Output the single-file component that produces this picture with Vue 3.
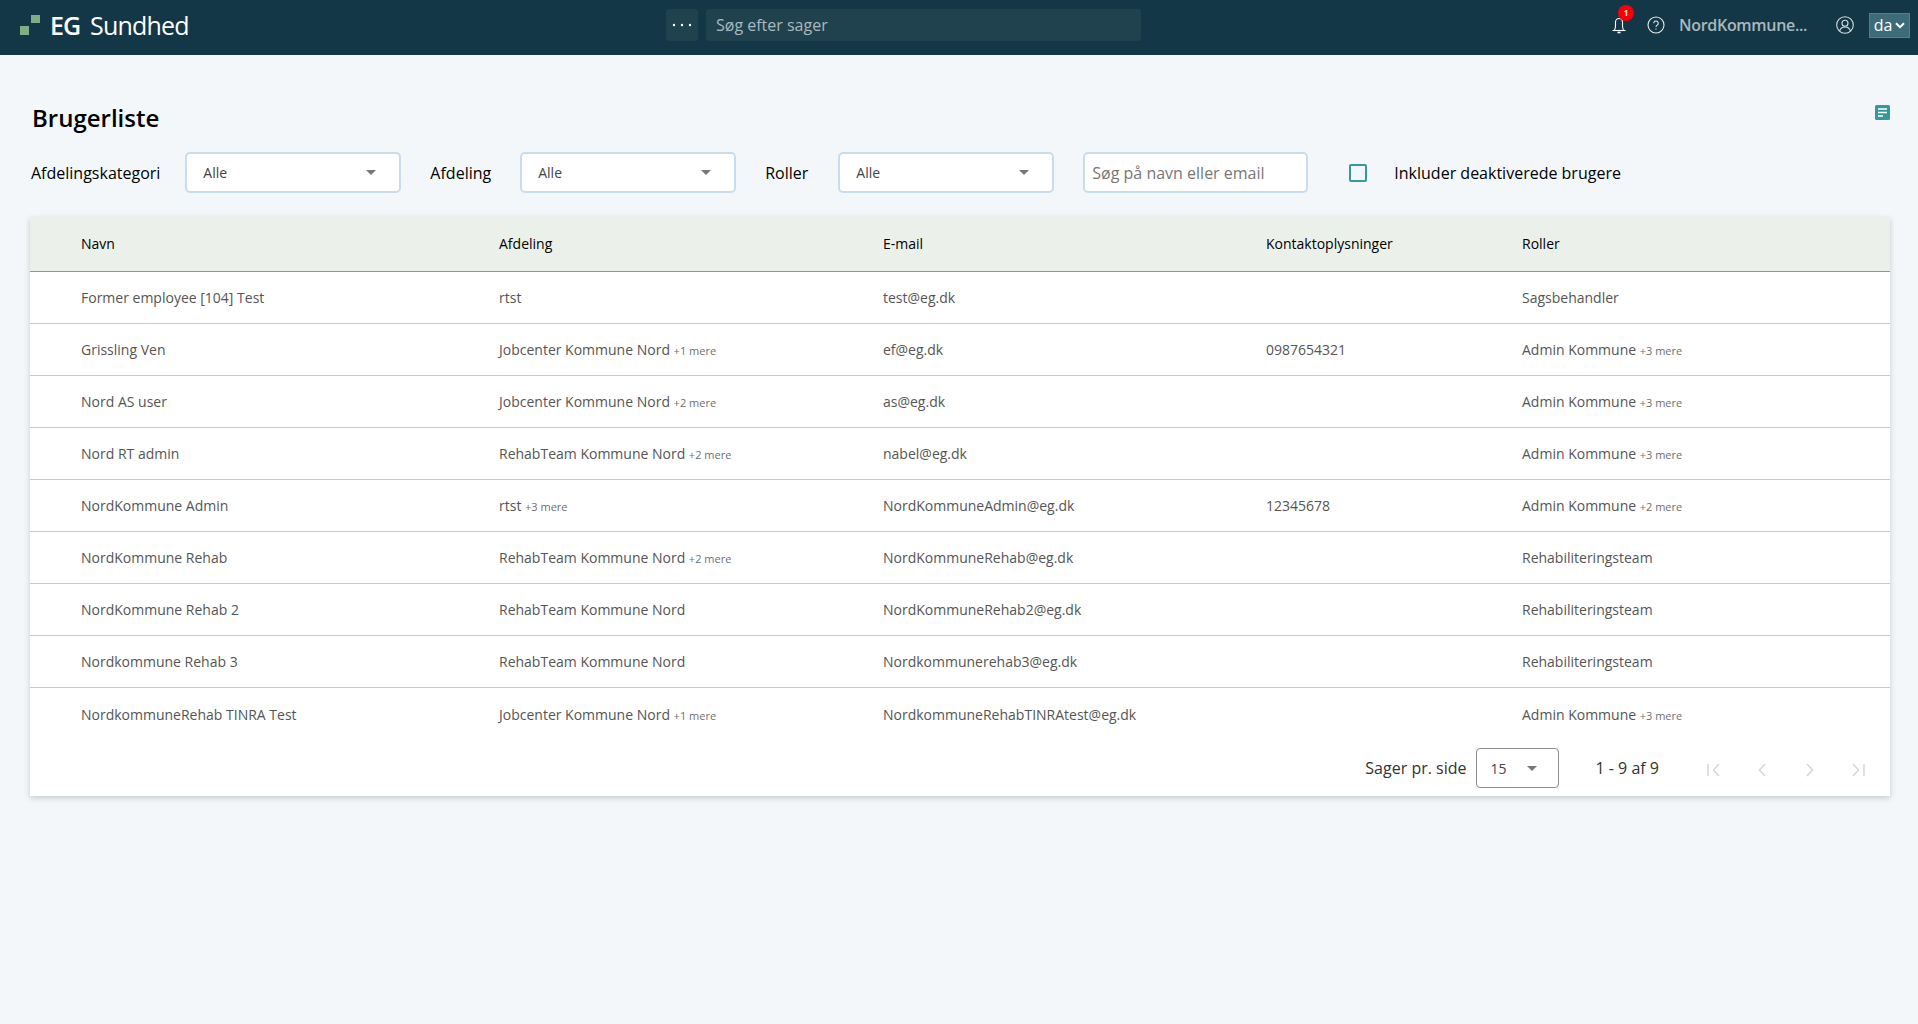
<script setup>
const filters = [
  { label: 'Afdelingskategori', value: 'Alle' },
  { label: 'Afdeling', value: 'Alle' },
  { label: 'Roller', value: 'Alle' }
]

const users = [
  { name: 'Former employee [104] Test', dept: 'rtst', deptMore: '', email: 'test@eg.dk', phone: '', role: 'Sagsbehandler', roleMore: '' },
  { name: 'Grissling Ven', dept: 'Jobcenter Kommune Nord', deptMore: '+1 mere', email: 'ef@eg.dk', phone: '0987654321', role: 'Admin Kommune', roleMore: '+3 mere' },
  { name: 'Nord AS user', dept: 'Jobcenter Kommune Nord', deptMore: '+2 mere', email: 'as@eg.dk', phone: '', role: 'Admin Kommune', roleMore: '+3 mere' },
  { name: 'Nord RT admin', dept: 'RehabTeam Kommune Nord', deptMore: '+2 mere', email: 'nabel@eg.dk', phone: '', role: 'Admin Kommune', roleMore: '+3 mere' },
  { name: 'NordKommune Admin', dept: 'rtst', deptMore: '+3 mere', email: 'NordKommuneAdmin@eg.dk', phone: '12345678', role: 'Admin Kommune', roleMore: '+2 mere' },
  { name: 'NordKommune Rehab', dept: 'RehabTeam Kommune Nord', deptMore: '+2 mere', email: 'NordKommuneRehab@eg.dk', phone: '', role: 'Rehabiliteringsteam', roleMore: '' },
  { name: 'NordKommune Rehab 2', dept: 'RehabTeam Kommune Nord', deptMore: '', email: 'NordKommuneRehab2@eg.dk', phone: '', role: 'Rehabiliteringsteam', roleMore: '' },
  { name: 'Nordkommune Rehab 3', dept: 'RehabTeam Kommune Nord', deptMore: '', email: 'Nordkommunerehab3@eg.dk', phone: '', role: 'Rehabiliteringsteam', roleMore: '' },
  { name: 'NordkommuneRehab TINRA Test', dept: 'Jobcenter Kommune Nord', deptMore: '+1 mere', email: 'NordkommuneRehabTINRAtest@eg.dk', phone: '', role: 'Admin Kommune', roleMore: '+3 mere' }
]
</script>

<template>
  <div class="page">
    <header class="topbar">
      <div class="brand">
        <svg class="logo" width="20" height="20" viewBox="0 0 20 20">
          <rect x="0" y="11" width="9" height="9" fill="#7fae84" />
          <rect x="11" y="0" width="9" height="8" fill="#7fae84" />
        </svg>
        <span class="brand-eg">EG</span>
        <span class="brand-name">Sundhed</span>
      </div>
      <div class="search-area">
        <button class="dots">
          <svg width="20" height="4" viewBox="0 0 20 4" fill="#fff">
            <circle cx="2" cy="2" r="1.2" />
            <circle cx="10" cy="2" r="1.2" />
            <circle cx="18" cy="2" r="1.2" />
          </svg>
        </button>
        <div class="case-search">Søg efter sager</div>
      </div>
      <div class="top-right">
        <div class="bell">
          <svg width="14" height="17" viewBox="0 0 14 17" fill="none" stroke="#fff" stroke-width="1.1">
            <path d="M2.500 13c.6-1 1-2 1-4V5a3.500 3.500 0 0 1 7 0v4c0 2 .4 3 1 4" />
            <path d="M.5 13.500h13" />
            <path d="M5.500 15.500h3" stroke-width="1.6" />
          </svg>
          <span class="badge">1</span>
        </div>
        <svg class="help" width="18" height="18" viewBox="0 0 18 18" fill="none" stroke="#e4eaec" stroke-width="1.1">
          <circle cx="9" cy="9" r="8" />
          <path d="M6.800 7.200a2.200 2.200 0 1 1 3.400 1.900c-.8.5-1.200 1-1.200 1.900" />
          <path d="M9 12.400v1.200" />
        </svg>
        <span class="username">NordKommune...</span>
        <svg class="user" width="18" height="18" viewBox="0 0 18 18" fill="none" stroke="#d5dee1" stroke-width="1.1">
          <circle cx="9" cy="9" r="8.3" />
          <circle cx="9" cy="7.2" r="3" />
          <path d="M3.600 15c.8-2.800 3-4 5.400-4s4.600 1.200 5.400 4" />
        </svg>
        <div class="lang">
          <span>da</span>
          <svg width="10" height="7" viewBox="0 0 10 7" fill="none" stroke="#fff" stroke-width="2">
            <path d="M1 1.200l4 4 4-4" />
          </svg>
        </div>
      </div>
    </header>

    <main class="content">
      <div class="title-row">
        <h1>Brugerliste</h1>
        <svg class="note-icon" width="15" height="15" viewBox="0 0 15 15">
          <rect width="15" height="15" rx="1.5" fill="#35989a" />
          <path d="M3 4h9M3 7.500h9M3 11h5" stroke="#fff" stroke-width="1.5" />
        </svg>
      </div>

      <div class="filters">
        <template v-for="f in filters" :key="f.label">
          <label class="filter-label">{{ f.label }}</label>
          <div class="select">
            <span>{{ f.value }}</span>
            <i class="caret"></i>
          </div>
        </template>
        <input class="search" type="text" placeholder="Søg på navn eller email" />
        <span class="checkbox"></span>
        <span class="check-label">Inkluder deaktiverede brugere</span>
      </div>

      <section class="card">
        <table>
          <colgroup>
            <col class="col-name" />
            <col class="col-dept" />
            <col class="col-mail" />
            <col class="col-phone" />
            <col />
          </colgroup>
          <thead>
            <tr>
              <th>Navn</th>
              <th>Afdeling</th>
              <th>E-mail</th>
              <th>Kontaktoplysninger</th>
              <th>Roller</th>
            </tr>
          </thead>
          <tbody>
            <tr v-for="u in users" :key="u.email">
              <td>{{ u.name }}</td>
              <td>{{ u.dept }} <small v-if="u.deptMore">{{ u.deptMore }}</small></td>
              <td>{{ u.email }}</td>
              <td>{{ u.phone }}</td>
              <td>{{ u.role }} <small v-if="u.roleMore">{{ u.roleMore }}</small></td>
            </tr>
          </tbody>
        </table>

        <div class="pager">
          <span class="per-page">Sager pr. side</span>
          <div class="page-select">
            <span>15</span>
            <i class="caret"></i>
          </div>
          <span class="range">1 - 9 af 9</span>
          <div class="page-btns">
            <svg width="16" height="14" viewBox="0 0 16 14" fill="none" stroke="#d6d6d6" stroke-width="1.5">
              <path d="M2 1v12M13 1L7.500 7l5.500 6" />
            </svg>
            <svg width="16" height="14" viewBox="0 0 16 14" fill="none" stroke="#d6d6d6" stroke-width="1.5">
              <path d="M11 1L5.500 7l5.500 6" />
            </svg>
            <svg width="16" height="14" viewBox="0 0 16 14" fill="none" stroke="#d6d6d6" stroke-width="1.5">
              <path d="M5 1l5.500 6L5 13" />
            </svg>
            <svg width="16" height="14" viewBox="0 0 16 14" fill="none" stroke="#d6d6d6" stroke-width="1.5">
              <path d="M14 1v12M3 1l5.500 6L3 13" />
            </svg>
          </div>
        </div>
      </section>
    </main>
  </div>
</template>

<style>
html,
body {
  margin: 0;
  background: #f3f7fa;
}
</style>

<style scoped>
.page {
  min-height: 1024px;
  background: #f3f7fa;
  font-family: 'Open Sans', 'Noto Sans', sans-serif;
  color: #000;
}

/* topbar */
.topbar {
  height: 55px;
  background: #143747;
  display: flex;
  align-items: center;
  box-sizing: border-box;
  padding: 0 8px 5px 20px;
}
.brand {
  width: 646px;
  display: flex;
  align-items: center;
}
.logo {
  margin-right: 10px;
}
.brand-eg {
  color: #fff;
  font-size: 25px;
  font-weight: 600;
  letter-spacing: -1px;
  margin-right: 10px;
}
.brand-name {
  color: #fff;
  font-size: 25px;
  letter-spacing: -0.8px;
}
.search-area {
  display: flex;
  gap: 8px;
}
.dots {
  width: 32px;
  height: 32px;
  border: 0;
  padding: 0;
  border-radius: 3px;
  background: #20424f;
  display: flex;
  align-items: center;
  justify-content: center;
}
.case-search {
  width: 435px;
  height: 32px;
  box-sizing: border-box;
  padding-left: 10px;
  line-height: 32px;
  border-radius: 3px;
  background: #20424f;
  color: #a9b9be;
  font-size: 16px;
}
.top-right {
  margin-left: auto;
  display: flex;
  align-items: center;
}
.bell {
  position: relative;
  width: 14px;
  height: 17px;
  margin-right: 21px;
}
.badge {
  position: absolute;
  top: -12px;
  left: 6px;
  width: 16px;
  height: 16px;
  border-radius: 50%;
  background: #f5000d;
  color: #fff0a8;
  font-size: 8px;
  font-weight: 700;
  line-height: 16px;
  text-align: center;
}
.help {
  margin-right: 14px;
}
.username {
  color: #a9b9be;
  font-size: 16px;
  font-weight: 600;
  letter-spacing: -0.3px;
  width: 157px;
}
.user {
  margin-right: 15px;
}
.lang {
  width: 41px;
  height: 25px;
  box-sizing: border-box;
  border: 1px solid #66787e;
  background: #3d6b7a;
  color: #fff;
  font-size: 16px;
  display: flex;
  align-items: center;
  justify-content: center;
  gap: 3px;
}

/* content */
.content {
  padding: 0 28px 0 30px;
}
.title-row {
  height: 97px;
  display: flex;
  align-items: flex-start;
  justify-content: space-between;
}
h1 {
  margin: 46px 0 0 2px;
  font-size: 24px;
  line-height: 34px;
  font-weight: 600;
}
.note-icon {
  margin-top: 50px;
}

.filters {
  height: 41px;
  margin-left: 1px;
  display: flex;
  align-items: center;
}
.filter-label {
  font-size: 16px;
  margin-right: 29px;
}
.filter-label:first-child {
  margin-right: 25px;
}
.filter-label:nth-child(5) {
  margin-right: 30px;
}
.select {
  width: 216px;
  height: 41px;
  box-sizing: border-box;
  border: 2px solid #c8dcee;
  border-radius: 5px;
  background: #fff;
  display: flex;
  align-items: center;
  justify-content: space-between;
  padding: 0 23px 0 16px;
  margin-right: 29px;
  font-size: 14px;
  color: #444;
}
.caret {
  display: block;
  width: 0;
  height: 0;
  border-left: 5px solid transparent;
  border-right: 5px solid transparent;
  border-top: 5px solid #777;
}
.search {
  width: 225px;
  height: 41px;
  box-sizing: border-box;
  border: 2px solid #c8dcee;
  border-radius: 5px;
  background: #fff;
  padding: 0 7px;
  font-family: inherit;
  font-size: 16px;
  outline: none;
}
.search::placeholder {
  color: #777;
  opacity: 1;
}
.checkbox {
  width: 18px;
  height: 18px;
  box-sizing: border-box;
  border: 2px solid #35989a;
  border-radius: 2px;
  margin: 0 27px 0 41px;
}
.check-label {
  font-size: 16px;
}

/* table */
.card {
  margin-top: 24px;
  background: #fff;
  box-shadow: 0 2px 6px rgba(0, 0, 0, 0.18);
}
table {
  width: 100%;
  border-collapse: collapse;
  table-layout: fixed;
}
.col-name {
  width: 469px;
}
.col-dept {
  width: 384px;
}
.col-mail {
  width: 383px;
}
.col-phone {
  width: 256px;
}
th {
  height: 54px;
  padding: 0;
  text-align: left;
  font-size: 14px;
  font-weight: 400;
  background: #ebf1ea;
  border-bottom: 1px solid #7fa283;
  box-sizing: border-box;
}
td {
  height: 52px;
  padding: 0;
  font-size: 14px;
  color: #555;
  border-bottom: 1px solid #cacaca;
  box-sizing: border-box;
}
tbody tr:last-child td {
  border-bottom: 0;
  padding-top: 2px;
}
th:first-child,
td:first-child {
  padding-left: 51px;
}
small {
  font-size: 11px;
  color: #6f6f6f;
}

/* pagination */
.pager {
  height: 57px;
  box-sizing: border-box;
  padding: 9px 0 8px;
  display: flex;
  align-items: center;
  justify-content: flex-end;
}
.per-page {
  font-size: 16px;
  color: #333;
  margin-right: 9px;
}
.page-select {
  width: 83px;
  height: 40px;
  box-sizing: border-box;
  border: 1px solid #8c8c8c;
  border-radius: 4px;
  display: flex;
  align-items: center;
  justify-content: space-between;
  padding: 0 21px 0 14px;
  font-size: 14px;
  color: #444;
}
.range {
  margin-left: 37px;
  font-size: 16px;
  color: #333;
}
.page-btns {
  margin-left: 47px;
  margin-right: 24px;
  margin-top: 3px;
  display: flex;
  gap: 32px;
}
</style>
